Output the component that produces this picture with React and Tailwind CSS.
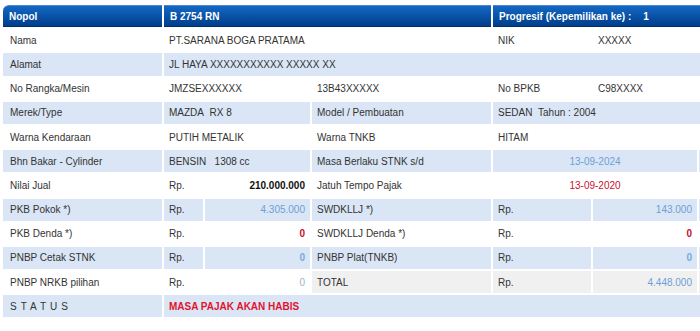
import React from "react";

const BLUE = "bg-[#dae6f5]";
const WHITE = "bg-white";

function C({ span = 1, bg, className = "", children }) {
  const spans = {
    1: "col-span-1",
    2: "col-span-2",
    3: "col-span-3",
    6: "col-span-6",
  };
  return (
    <div
      className={`${spans[span]} ${bg} flex items-center px-[5px] whitespace-nowrap overflow-hidden ${className}`}
    >
      {children}
    </div>
  );
}

function H({ span = 1, className = "", children }) {
  const spans = { 1: "col-span-1", 3: "col-span-3" };
  return (
    <div
      className={`${spans[span]} flex items-center px-[6px] whitespace-nowrap overflow-hidden bg-linear-to-b from-[#1468c4] to-[#013e8b] border-t border-t-[#4d86cf] border-b border-b-[#00306e] text-white font-bold text-[10px] ${className}`}
    >
      {children}
    </div>
  );
}

export default function App() {
  return (
    <div
      className="w-[700px] h-[331px] overflow-hidden bg-white pt-[5px] pl-[3px] text-[10px] text-[#333333]"
      style={{ fontFamily: '"Liberation Sans", Arial, sans-serif' }}
    >
      <div className="grid w-max grid-cols-[159px_39px_105px_179px_98px_104px_60px] auto-rows-[22.2px] gap-[2px]">
        {/* header */}
        <H className="rounded-tl-[6px]">Nopol</H>
        <H span={3}>B 2754 RN</H>
        <H span={3}>
          Progresif (Kepemilikan ke) :<span className="ml-[12px]">1</span>
        </H>

        {/* Nama */}
        <C bg={WHITE} className="pl-[7px]">Nama</C>
        <C bg={WHITE} span={3}>PT.SARANA BOGA PRATAMA</C>
        <C bg={WHITE}>NIK</C>
        <C bg={WHITE}>XXXXX</C>
        <C bg={WHITE}></C>

        {/* Alamat */}
        <C bg={BLUE} className="pl-[7px]">Alamat</C>
        <C bg={BLUE} span={6}>JL HAYA XXXXXXXXXXX XXXXX XX</C>

        {/* No Rangka */}
        <C bg={WHITE} className="pl-[7px]">No Rangka/Mesin</C>
        <C bg={WHITE} span={2}>JMZSEXXXXXX</C>
        <C bg={WHITE}>13B43XXXXX</C>
        <C bg={WHITE}>No BPKB</C>
        <C bg={WHITE}>C98XXXX</C>
        <C bg={WHITE}></C>

        {/* Merek */}
        <C bg={BLUE} className="pl-[7px]">Merek/Type</C>
        <C bg={BLUE} span={2}>MAZDA&nbsp;&nbsp;RX 8</C>
        <C bg={BLUE}>Model / Pembuatan</C>
        <C bg={BLUE} span={3}>SEDAN&nbsp;&nbsp;Tahun : 2004</C>

        {/* Warna */}
        <C bg={WHITE} className="pl-[7px]">Warna Kendaraan</C>
        <C bg={WHITE} span={2}>PUTIH METALIK</C>
        <C bg={WHITE}>Warna TNKB</C>
        <C bg={WHITE} span={3}>HITAM</C>

        {/* Bahan bakar */}
        <C bg={BLUE} className="pl-[7px]">Bhn Bakar - Cylinder</C>
        <C bg={BLUE} span={2}>BENSIN&nbsp;&nbsp;&nbsp;1308 cc</C>
        <C bg={BLUE}>Masa Berlaku STNK s/d</C>
        <C bg={BLUE} span={2} className="justify-center text-[#6d9fd6]">13-09-2024</C>
        <C bg={BLUE}></C>

        {/* Nilai jual */}
        <C bg={WHITE} className="pl-[7px]">Nilai Jual</C>
        <C bg={WHITE}>Rp.</C>
        <C bg={WHITE} className="justify-end font-bold text-[#111111]">210.000.000</C>
        <C bg={WHITE}>Jatuh Tempo Pajak</C>
        <C bg={WHITE} span={2} className="justify-center text-[#c8102e]">13-09-2020</C>
        <C bg={WHITE}></C>

        {/* PKB Pokok */}
        <C bg={BLUE} className="pl-[7px]">PKB Pokok *)</C>
        <C bg={BLUE}>Rp.</C>
        <C bg={BLUE} className="justify-end text-[#6d9fd6]">4.305.000</C>
        <C bg={BLUE}>SWDKLLJ *)</C>
        <C bg={BLUE}>Rp.</C>
        <C bg={BLUE} className="justify-end text-[#6d9fd6]">143.000</C>
        <C bg={BLUE}></C>

        {/* PKB Denda */}
        <C bg={WHITE} className="pl-[7px]">PKB Denda *)</C>
        <C bg={WHITE}>Rp.</C>
        <C bg={WHITE} className="justify-end font-bold text-[#c8102e]">0</C>
        <C bg={WHITE}>SWDKLLJ Denda *)</C>
        <C bg={WHITE}>Rp.</C>
        <C bg={WHITE} className="justify-end font-bold text-[#c8102e]">0</C>
        <C bg={WHITE}></C>

        {/* PNBP Cetak */}
        <C bg={BLUE} className="pl-[7px]">PNBP Cetak STNK</C>
        <C bg={BLUE}>Rp.</C>
        <C bg={BLUE} className="justify-end font-bold text-[#7aa9dc]">0</C>
        <C bg={BLUE}>PNBP Plat(TNKB)</C>
        <C bg={BLUE}>Rp.</C>
        <C bg={BLUE} className="justify-end font-bold text-[#7aa9dc]">0</C>
        <C bg={BLUE}></C>

        {/* PNBP NRKB */}
        <C bg={WHITE} className="pl-[7px]">PNBP NRKB pilihan</C>
        <C bg={WHITE}>Rp.</C>
        <C bg={WHITE} className="justify-end text-[#9fb4c8]">0</C>
        <C bg="bg-[#f0f0f0]">TOTAL</C>
        <C bg="bg-[#f0f0f0]">Rp.</C>
        <C bg="bg-[#f0f0f0]" className="justify-end text-[#6d9fd6]">4.448.000</C>
        <C bg="bg-[#f0f0f0]"></C>

        {/* STATUS */}
        <C bg={BLUE} className="pl-[7px] tracking-[4px]">STATUS</C>
        <C bg={BLUE} span={6} className="font-bold text-[#e3132d]">MASA PAJAK AKAN HABIS</C>
      </div>
    </div>
  );
}
